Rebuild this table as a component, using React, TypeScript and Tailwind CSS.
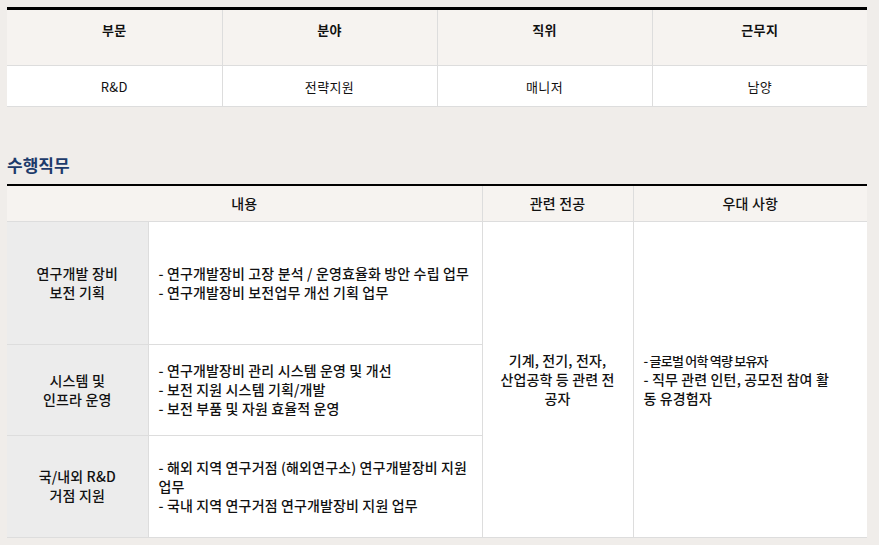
const summary = [
  { label: "부문", value: "R&D" },
  { label: "분야", value: "전략지원" },
  { label: "직위", value: "매니저" },
  { label: "근무지", value: "남양" },
];

const duties = [
  {
    title: ["연구개발 장비", "보전 기획"],
    items: [
      "- 연구개발장비 고장 분석 / 운영효율화 방안 수립 업무",
      "- 연구개발장비 보전업무 개선 기획 업무",
    ],
    height: "h-[123px]",
  },
  {
    title: ["시스템 및", "인프라 운영"],
    items: [
      "- 연구개발장비 관리 시스템 운영 및 개선",
      "- 보전 지원 시스템 기획/개발",
      "- 보전 부품 및 자원 효율적 운영",
    ],
    height: "h-[91px]",
  },
  {
    title: ["국/내외 R&D", "거점 지원"],
    items: [
      "- 해외 지역 연구거점 (해외연구소) 연구개발장비 지원 업무",
      "- 국내 지역 연구거점 연구개발장비 지원 업무",
    ],
    height: "h-[102px]",
  },
];

export default function App() {
  return (
    <div
      className="min-h-[545px] w-full bg-[#f0edea] px-[7px] pt-[7px] text-[13px] leading-[19px] text-[#111]"
      style={{ fontFamily: '"Noto Sans CJK KR", "Noto Sans", sans-serif' }}
    >
      <table className="w-[860px] table-fixed border-collapse border-t-[3px] border-black tracking-[0.03em]">
        <thead>
          <tr>
            {summary.map((s) => (
              <th
                key={s.label}
                className="h-[57px] border-x border-b border-[#dddddd] bg-[#f6f3f0] pt-[10px] align-top font-bold first:border-l-0 last:border-r-0"
              >
                {s.label}
              </th>
            ))}
          </tr>
        </thead>
        <tbody>
          <tr>
            {summary.map((s) => (
              <td
                key={s.label}
                className="h-[41px] border-x border-b border-[#dddddd] bg-white text-center align-middle first:border-l-0 last:border-r-0"
              >
                {s.value}
              </td>
            ))}
          </tr>
        </tbody>
      </table>

      <h2 className="mt-[47px] text-[17px] leading-[22px] font-bold text-[#1d3b6b]">수행직무</h2>

      <table className="mt-[8px] w-[860px] table-fixed border-collapse border-t-2 border-black text-[14px] font-medium tracking-[0.01em]">
        <colgroup>
          <col className="w-[141px]" />
          <col className="w-[334px]" />
          <col className="w-[151px]" />
          <col />
        </colgroup>
        <thead>
          <tr>
            <th
              colSpan={2}
              className="h-[36px] border-r border-b border-[#dddddd] bg-[#f6f3f0] font-medium"
            >
              내용
            </th>
            <th className="border-r border-b border-[#dddddd] bg-[#f6f3f0] font-medium">관련 전공</th>
            <th className="border-b border-[#dddddd] bg-[#f6f3f0] font-medium">우대 사항</th>
          </tr>
        </thead>
        <tbody>
          {duties.map((d, i) => (
            <tr key={i}>
              <td
                className={`${d.height} border-r border-b border-[#dddddd] bg-[#ececec] text-center align-middle`}
              >
                {d.title[0]}
                <br />
                {d.title[1]}
              </td>
              <td className="border-r border-b border-[#dddddd] bg-white px-[10px] align-middle">
                {d.items.map((t) => (
                  <div key={t}>{t}</div>
                ))}
              </td>
              {i === 0 && (
                <>
                  <td
                    rowSpan={3}
                    className="border-r border-b border-[#dddddd] bg-white px-[15px] text-center align-middle"
                  >
                    기계, 전기, 전자,
                    <br />
                    산업공학 등 관련 전공자
                  </td>
                  <td
                    rowSpan={3}
                    className="border-b border-[#dddddd] bg-white pr-[30px] pl-[10px] align-middle"
                  >
                    <div className="text-[13px] tracking-[-0.06em]">- 글로벌 어학 역량 보유자</div>
                    <div>- 직무 관련 인턴, 공모전 참여 활동 유경험자</div>
                  </td>
                </>
              )}
            </tr>
          ))}
        </tbody>
      </table>
    </div>
  );
}
